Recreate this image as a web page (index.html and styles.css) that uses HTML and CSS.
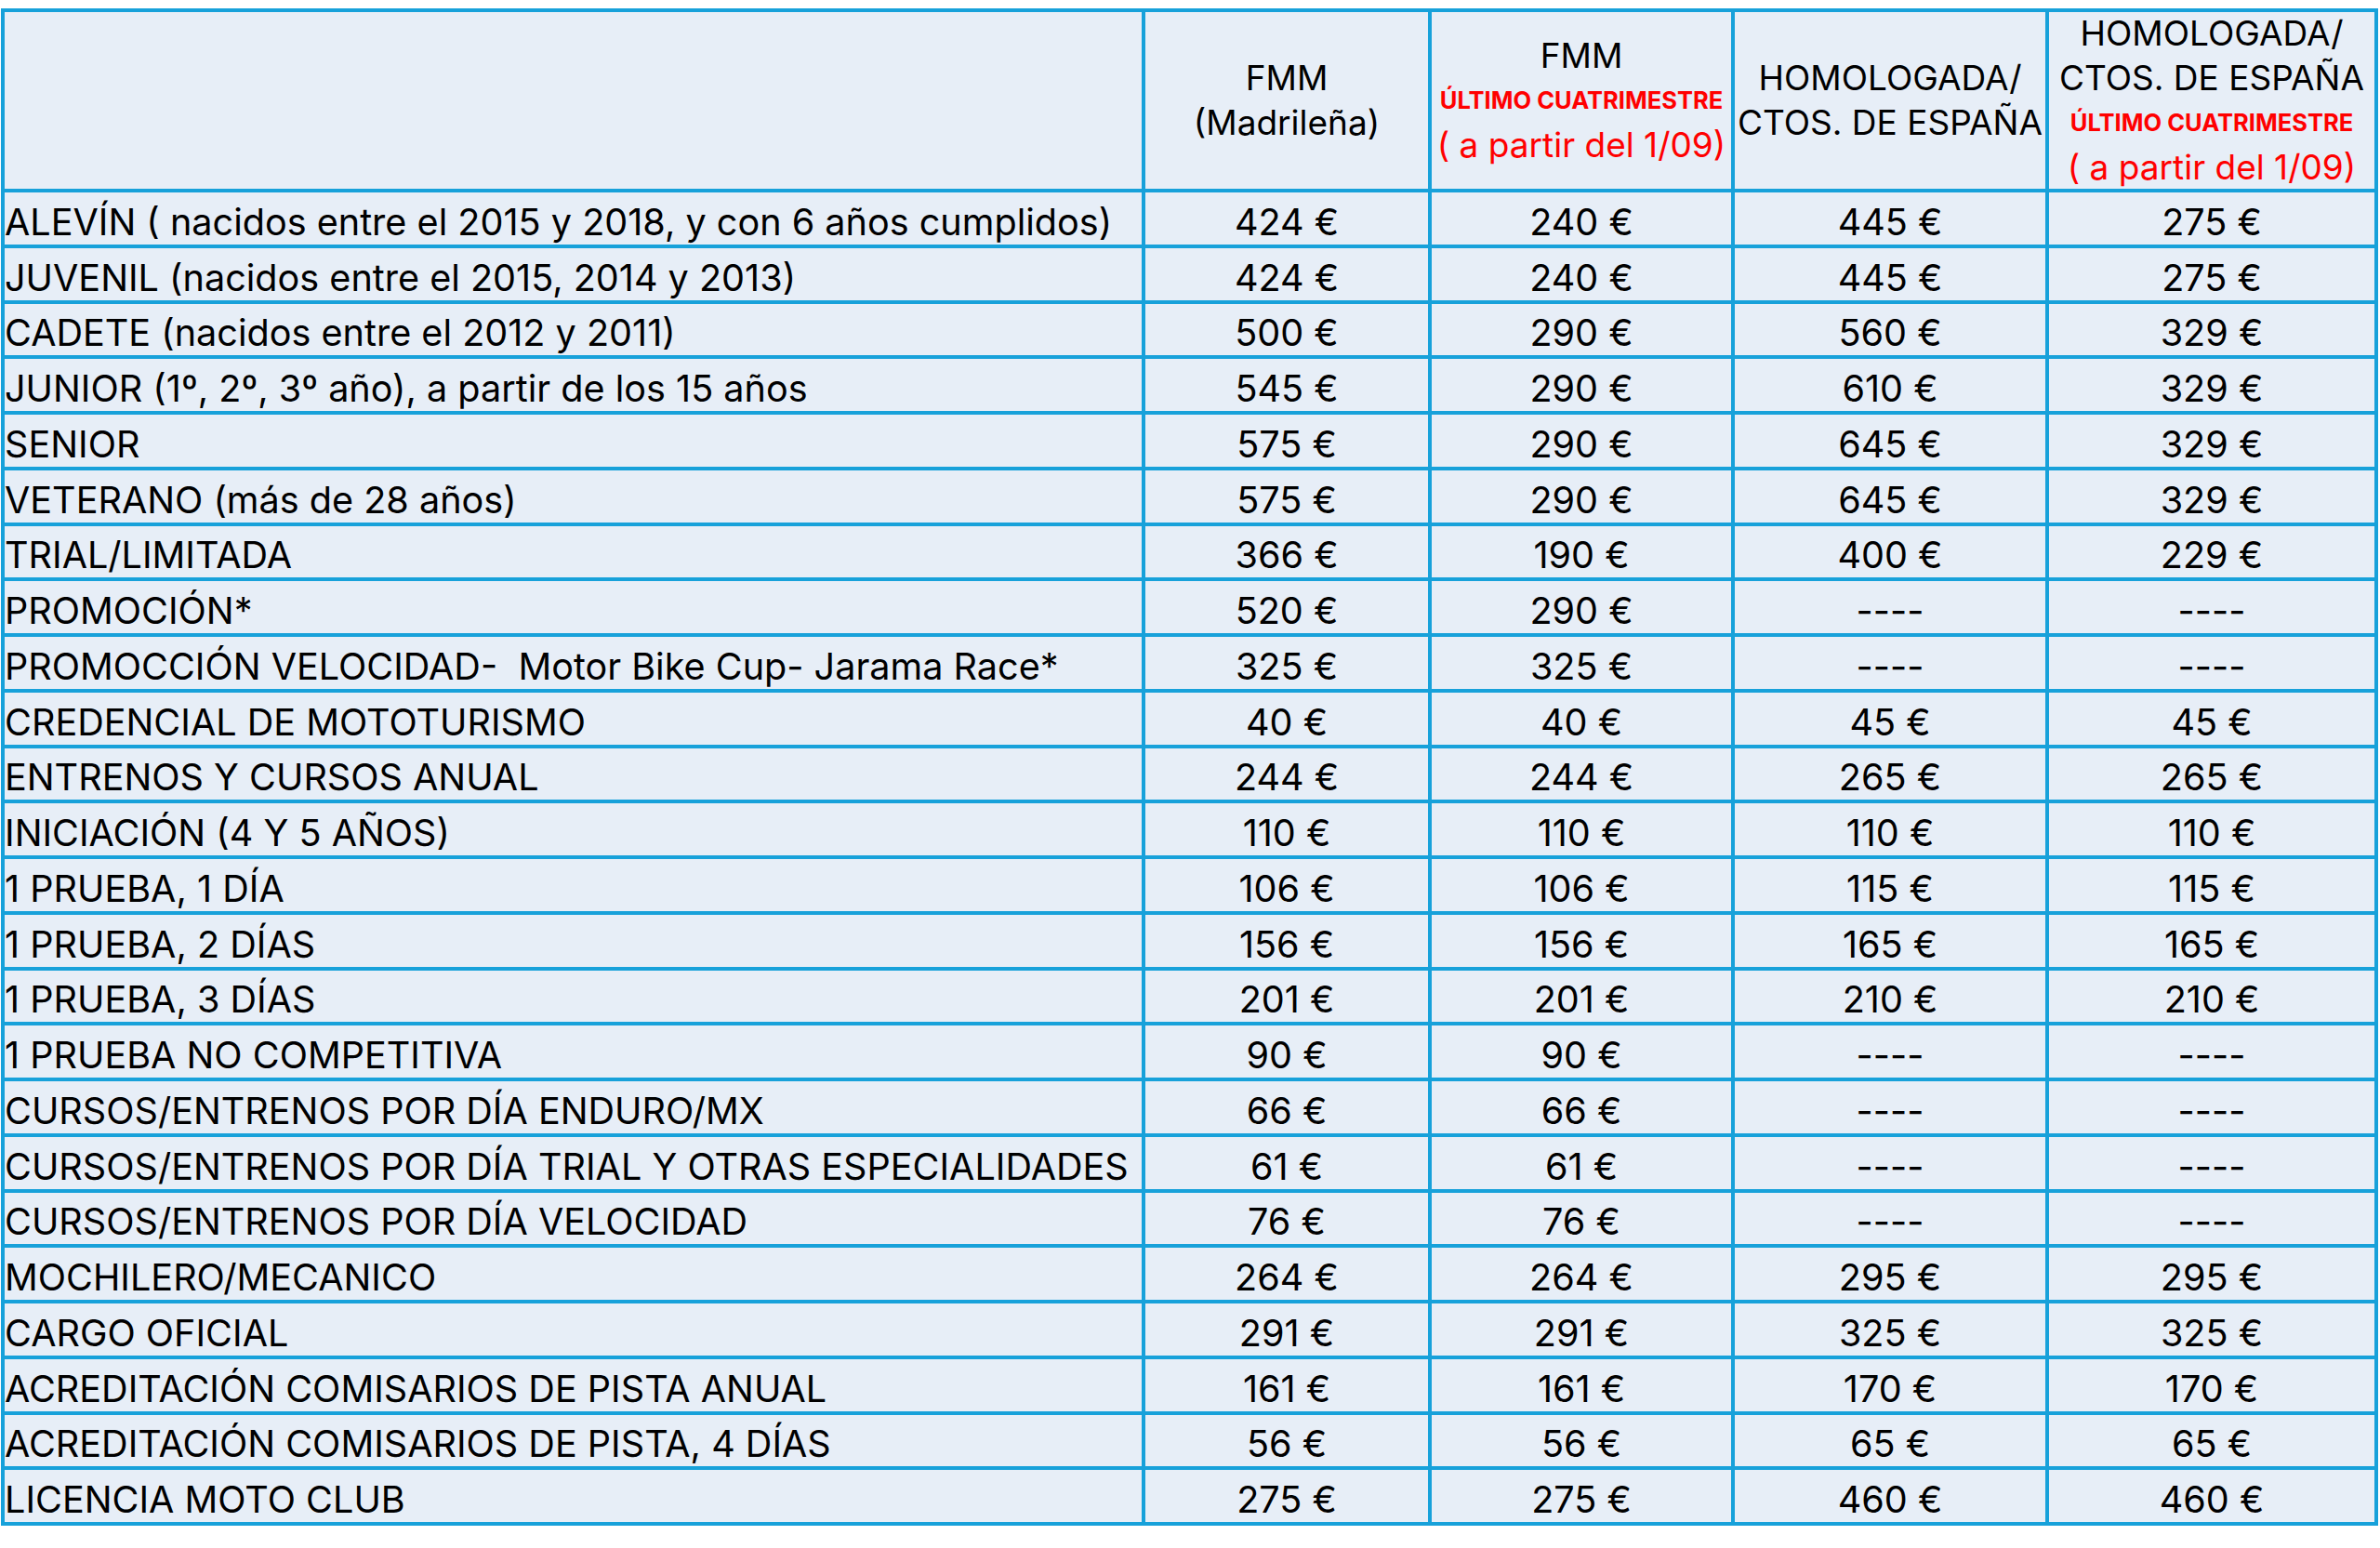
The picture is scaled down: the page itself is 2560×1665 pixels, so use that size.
FILE: index.html
```html
<!DOCTYPE html>
<html lang="es">
<head>
<meta charset="utf-8">
<title>Licencias FMM</title>
<link rel="stylesheet" href="styles.css">
</head>
<body>
<div class="sheet">
  <div class="hc"></div>
  <div class="hc"><span>FMM</span><span>(Madrileña)</span></div>
  <div class="hc"><span>FMM</span><span class="red-b">ÚLTIMO CUATRIMESTRE</span><span class="red">( a partir del 1/09)</span></div>
  <div class="hc"><span>HOMOLOGADA/</span><span>CTOS. DE ESPAÑA</span></div>
  <div class="hc"><span>HOMOLOGADA/</span><span>CTOS. DE ESPAÑA</span><span class="red-b">ÚLTIMO CUATRIMESTRE</span><span class="red">( a partir del 1/09)</span></div>

  <div class="c name">ALEVÍN ( nacidos entre el 2015 y 2018, y con 6 años cumplidos)</div><div class="c">424 €</div><div class="c">240 €</div><div class="c">445 €</div><div class="c">275 €</div>
  <div class="c name">JUVENIL (nacidos entre el 2015, 2014 y 2013)</div><div class="c">424 €</div><div class="c">240 €</div><div class="c">445 €</div><div class="c">275 €</div>
  <div class="c name">CADETE (nacidos entre el 2012 y 2011)</div><div class="c">500 €</div><div class="c">290 €</div><div class="c">560 €</div><div class="c">329 €</div>
  <div class="c name">JUNIOR (1º, 2º, 3º año), a partir de los 15 años</div><div class="c">545 €</div><div class="c">290 €</div><div class="c">610 €</div><div class="c">329 €</div>
  <div class="c name">SENIOR</div><div class="c">575 €</div><div class="c">290 €</div><div class="c">645 €</div><div class="c">329 €</div>
  <div class="c name">VETERANO (más de 28 años)</div><div class="c">575 €</div><div class="c">290 €</div><div class="c">645 €</div><div class="c">329 €</div>
  <div class="c name">TRIAL/LIMITADA</div><div class="c">366 €</div><div class="c">190 €</div><div class="c">400 €</div><div class="c">229 €</div>
  <div class="c name">PROMOCIÓN*</div><div class="c">520 €</div><div class="c">290 €</div><div class="c">----</div><div class="c">----</div>
  <div class="c name">PROMOCCIÓN VELOCIDAD-&nbsp; Motor Bike Cup- Jarama Race*</div><div class="c">325 €</div><div class="c">325 €</div><div class="c">----</div><div class="c">----</div>
  <div class="c name">CREDENCIAL DE MOTOTURISMO</div><div class="c">40 €</div><div class="c">40 €</div><div class="c">45 €</div><div class="c">45 €</div>
  <div class="c name">ENTRENOS Y CURSOS ANUAL</div><div class="c">244 €</div><div class="c">244 €</div><div class="c">265 €</div><div class="c">265 €</div>
  <div class="c name">INICIACIÓN (4 Y 5 AÑOS)</div><div class="c">110 €</div><div class="c">110 €</div><div class="c">110 €</div><div class="c">110 €</div>
  <div class="c name">1 PRUEBA, 1 DÍA</div><div class="c">106 €</div><div class="c">106 €</div><div class="c">115 €</div><div class="c">115 €</div>
  <div class="c name">1 PRUEBA, 2 DÍAS</div><div class="c">156 €</div><div class="c">156 €</div><div class="c">165 €</div><div class="c">165 €</div>
  <div class="c name">1 PRUEBA, 3 DÍAS</div><div class="c">201 €</div><div class="c">201 €</div><div class="c">210 €</div><div class="c">210 €</div>
  <div class="c name">1 PRUEBA NO COMPETITIVA</div><div class="c">90 €</div><div class="c">90 €</div><div class="c">----</div><div class="c">----</div>
  <div class="c name">CURSOS/ENTRENOS POR DÍA ENDURO/MX</div><div class="c">66 €</div><div class="c">66 €</div><div class="c">----</div><div class="c">----</div>
  <div class="c name">CURSOS/ENTRENOS POR DÍA TRIAL Y OTRAS ESPECIALIDADES</div><div class="c">61 €</div><div class="c">61 €</div><div class="c">----</div><div class="c">----</div>
  <div class="c name">CURSOS/ENTRENOS POR DÍA VELOCIDAD</div><div class="c">76 €</div><div class="c">76 €</div><div class="c">----</div><div class="c">----</div>
  <div class="c name">MOCHILERO/MECANICO</div><div class="c">264 €</div><div class="c">264 €</div><div class="c">295 €</div><div class="c">295 €</div>
  <div class="c name">CARGO OFICIAL</div><div class="c">291 €</div><div class="c">291 €</div><div class="c">325 €</div><div class="c">325 €</div>
  <div class="c name">ACREDITACIÓN COMISARIOS DE PISTA ANUAL</div><div class="c">161 €</div><div class="c">161 €</div><div class="c">170 €</div><div class="c">170 €</div>
  <div class="c name">ACREDITACIÓN COMISARIOS DE PISTA, 4 DÍAS</div><div class="c">56 €</div><div class="c">56 €</div><div class="c">65 €</div><div class="c">65 €</div>
  <div class="c name">LICENCIA MOTO CLUB</div><div class="c">275 €</div><div class="c">275 €</div><div class="c">460 €</div><div class="c">460 €</div>
</div>
</body>
</html>
```

FILE: styles.css
```css
html, body {
  margin: 0;
  padding: 0;
  background: #ffffff;
}

body {
  font-family: Inter, "Noto Sans", sans-serif;
  color: #000000;
}

.sheet {
  box-sizing: border-box;
  display: grid;
  grid-template-columns: 1223px 304px 322px 334px 350px;
  grid-template-rows: 190px repeat(24, 1fr);
  gap: 4px;
  padding: 4px;
  width: 2557px;
  height: 1632px;
  margin: 9px 0 0 1px;
  background: #17a1da;
}

.hc {
  background: #e7eef7;
  display: flex;
  flex-direction: column;
  align-items: center;
  justify-content: center;
  text-align: center;
  font-size: 37px;
  line-height: 48px;
  white-space: nowrap;
}

.red {
  color: #ff0000;
}

.red-b {
  color: #ff0000;
  font-weight: 700;
  font-size: 25.5px;
}

.c {
  background: #e7eef7;
  display: flex;
  align-items: flex-end;
  justify-content: center;
  font-size: 39.6px;
  line-height: 40px;
  padding-bottom: 4px;
  box-sizing: border-box;
  white-space: nowrap;
}

.c.name {
  justify-content: flex-start;
  padding-left: 0;
}
```
